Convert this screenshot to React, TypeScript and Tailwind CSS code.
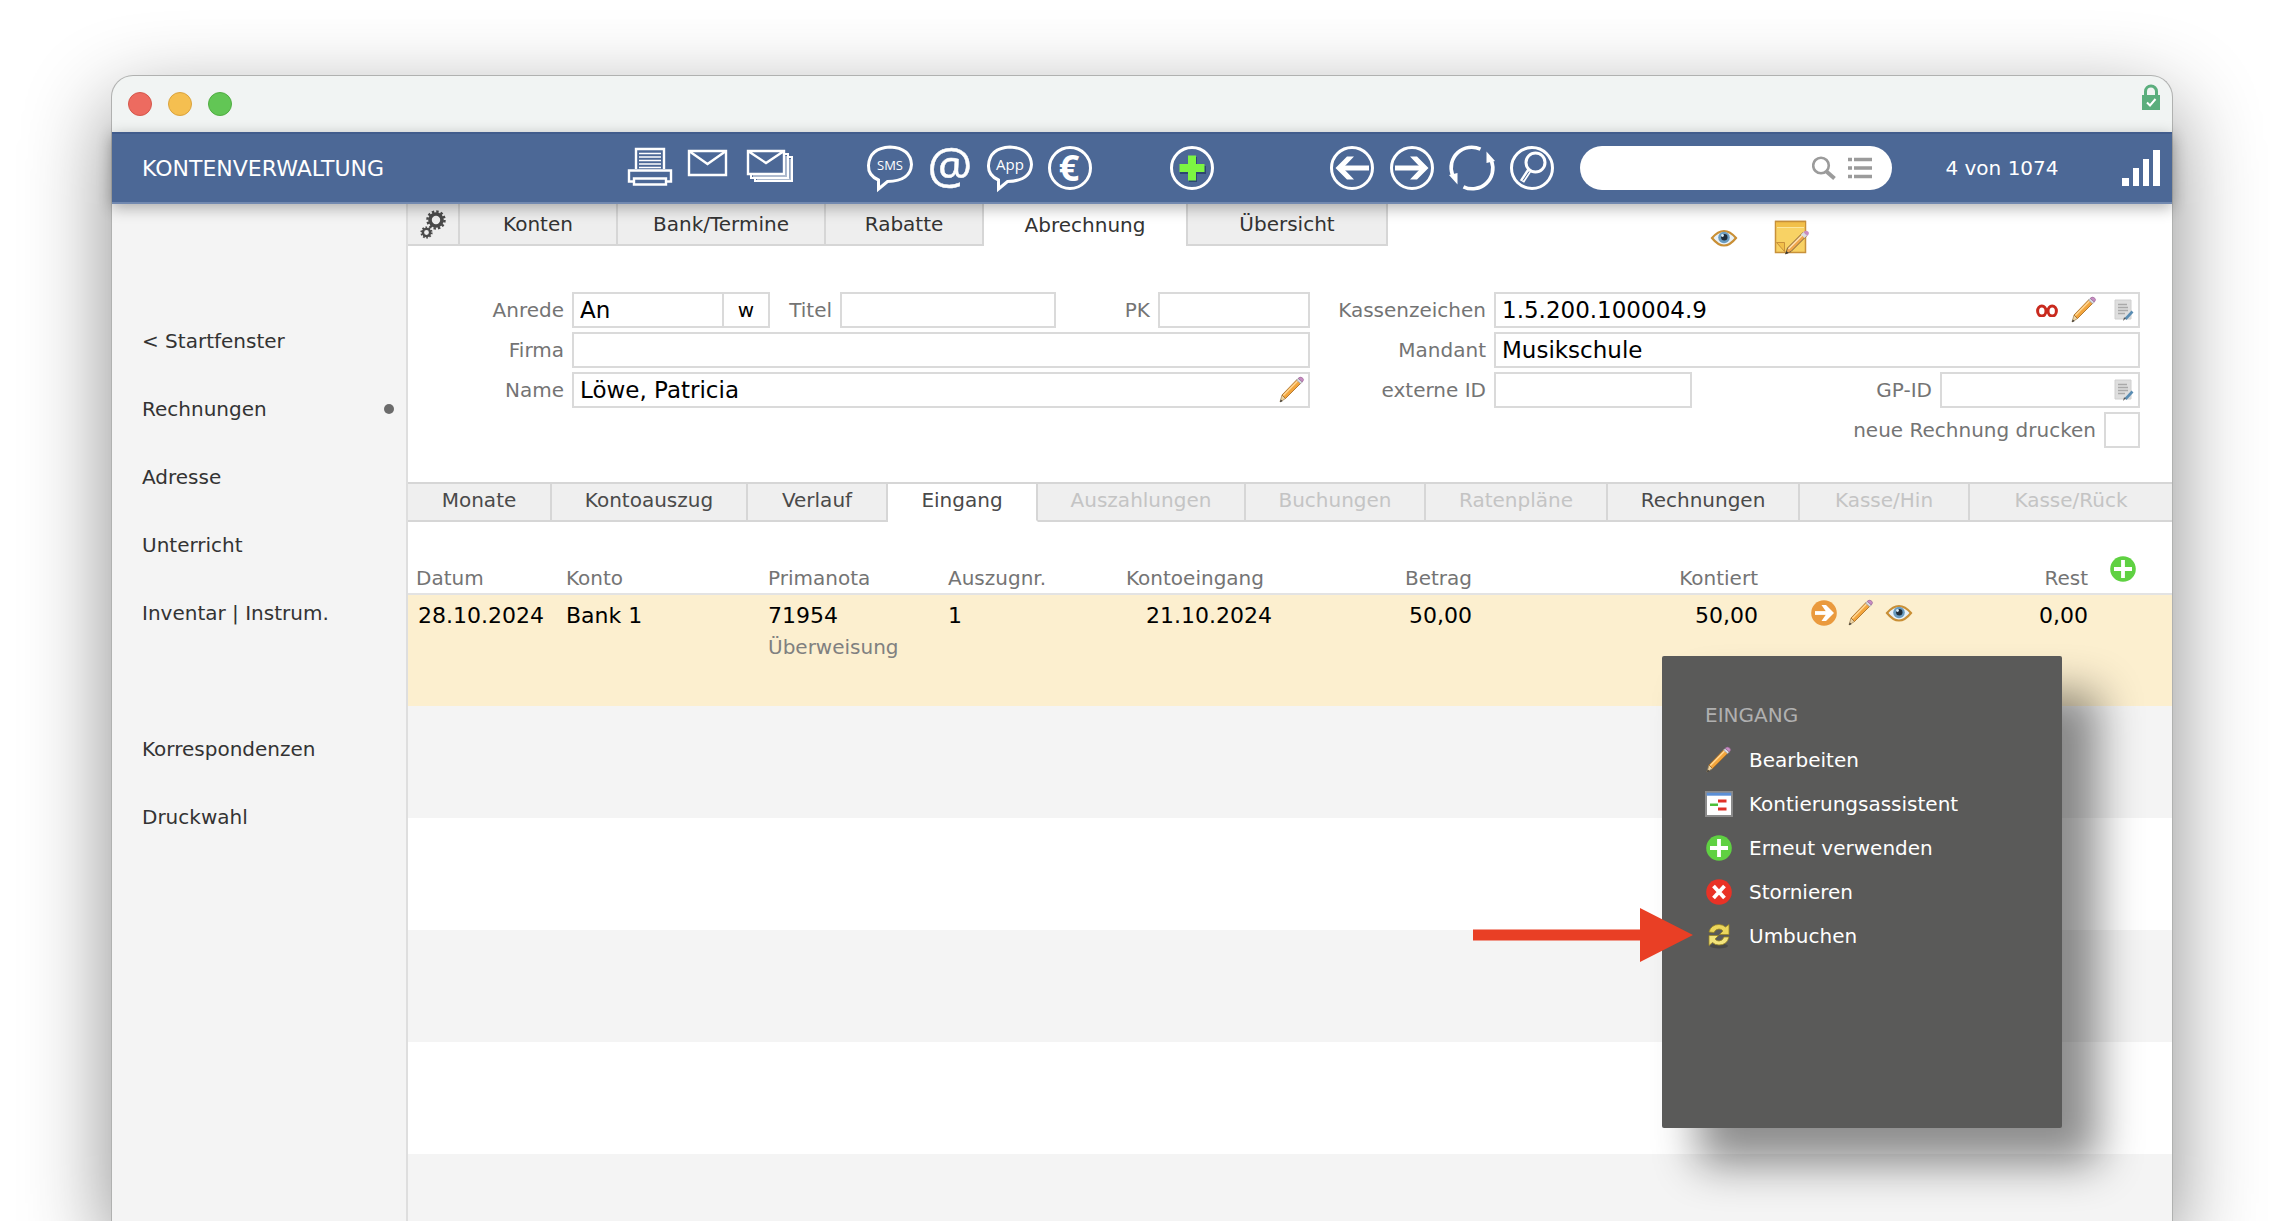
import type { ReactNode } from "react";

type Tab = { label: string; active?: boolean; disabled?: boolean };

const NAV = ["< Startfenster", "Rechnungen", "Adresse", "Unterricht", "Inventar | Instrum.", "", "Korrespondenzen", "Druckwahl"];

const SUB_TABS: Tab[] = [
  { label: "Monate" },
  { label: "Kontoauszug" },
  { label: "Verlauf" },
  { label: "Eingang", active: true },
  { label: "Auszahlungen", disabled: true },
  { label: "Buchungen", disabled: true },
  { label: "Ratenpläne", disabled: true },
  { label: "Rechnungen" },
  { label: "Kasse/Hin", disabled: true },
  { label: "Kasse/Rück", disabled: true },
];

function Pencil() {
  return (
    <svg viewBox="0 0 28 28" className="size-7">
      <path d="M2 26.500l7-5-4-2z" fill="#000" opacity=".15" />
      <path d="M2 26l2-7 3.500 3.500z" fill="#ecd3a4" stroke="#a58a5c" strokeWidth=".8" />
      <path d="M4 19L19 3.500l4 3.500L7.500 22.500z" fill="#f3a53c" stroke="#a9702b" strokeWidth=".9" />
      <path d="M5.300 19.500L19.500 5" stroke="#ffd793" strokeWidth="1.500" />
      <path d="M18.500 4l1.600-1.600 4.200 3.600-1.700 1.700z" fill="#d9dce3" stroke="#8d8f9a" strokeWidth=".6" />
      <path d="M20.200 2.300Q22 .300 24.300 1.700 26.800 3.600 24.300 6z" fill="#c88cc4" stroke="#93638f" strokeWidth=".6" />
      <path d="M2 26l.8-2.600 1.800 1.800z" fill="#333" />
    </svg>
  );
}

function Eye() {
  return (
    <svg viewBox="0 0 28 20" className="h-5 w-7">
      <path d="M2 10Q8 3 14 3t12 7q-6 7.500-12 7.500T2 10z" fill="#e8f1f7" stroke="#c98f35" strokeWidth="2.200" />
      <circle cx="14" cy="9.500" r="5.800" fill="#6a9cc0" />
      <circle cx="14.300" cy="9.300" r="3.200" fill="#1f2d3a" />
      <circle cx="12.500" cy="7.500" r="1.400" fill="#d6ebf7" />
    </svg>
  );
}

function Doc() {
  return (
    <svg viewBox="0 0 20 24" className="h-6 w-5">
      <path d="M1 2h16v19H1z" fill="#dedede" stroke="#d0d0d0" />
      <path d="M4 6.500h9M4 9.500h10M4 12.500h10M4 15.500h7" stroke="#aaa" strokeWidth="1.300" />
      <path d="M18.500 13.500L11.500 21" stroke="#5a8db3" strokeWidth="2.600" />
      <path d="M12 20l-3 3 1-3.500z" fill="#555" />
    </svg>
  );
}

function Badge({ kind }: { kind: "plus" | "cross" | "arrow" }) {
  const fill = kind === "plus" ? "#5fd142" : kind === "cross" ? "#e93226" : "#ea9a3e";
  return (
    <svg viewBox="0 0 26 26" className="size-[26px]" fill="none" stroke="#fff" strokeWidth="3.800">
      <circle cx="13" cy="13" r="12.800" fill={fill} stroke="none" />
      {kind === "plus" && <path d="M13 4v18M4 13h18" />}
      {kind === "cross" && <path d="M7.500 7l11 12M18.500 7l-11 12" />}
      {kind === "arrow" && (
        <>
          <path d="M4 13h13" />
          <path d="M10.500 5h4.500l8 8-8 8h-4.500l5.500-8z" fill="#fff" stroke="none" />
        </>
      )}
    </svg>
  );
}

function Assistant() {
  return (
    <svg viewBox="0 0 28 26" className="h-[26px] w-7">
      <path d="M1 1h26v24H1z" fill="#fff" stroke="#8b8b8b" strokeWidth="2" />
      <path d="M1.700 1.700h24.600v3H1.700z" fill="#5b8fd6" />
      <path d="M5 12.500h8v2.500H5z" fill="#4fbf3a" />
      <path d="M13 8.500h8.500v3H13zM13 16.500h8.500v3H13z" fill="#e03127" />
    </svg>
  );
}

function Rebook() {
  return (
    <svg viewBox="0 0 24 26" className="h-[26px] w-6">
      <ellipse cx="12" cy="23" rx="9" ry="2.500" fill="#000" opacity=".2" />
      <path d="M2 9Q4 1.500 12 1.500q4 0 6.500 2.500L22 1.500v10h-9.500L16 8q-1.500-2-4-2-3.500 0-5 3.500z" fill="#ecd75c" stroke="#9b8724" strokeWidth=".8" />
      <path d="M22 14q-2 8-10 8-4 0-6.500-2.500L2 22.500v-10h9.500L8 16q1.500 2 4 2 3.500 0 5-4z" fill="#f3e47b" stroke="#9b8724" strokeWidth=".8" />
    </svg>
  );
}

function Gears() {
  return (
    <svg viewBox="0 0 26 30" className="h-[30px] w-[26px]" fill="none" stroke="#4a4a4a">
      <circle cx="16" cy="11" r="6" strokeWidth="3.600" />
      <circle cx="16" cy="11" r="8.500" strokeWidth="2.500" strokeDasharray="2.400 2.050" />
      <circle cx="6.500" cy="23.500" r="3.600" strokeWidth="2.400" />
      <circle cx="6.500" cy="23.500" r="5.200" strokeWidth="1.800" strokeDasharray="1.700 1.560" />
    </svg>
  );
}

function Note() {
  return (
    <svg viewBox="0 0 36 36" className="size-9">
      <path d="M1.500 1.500h30v31h-30z" fill="#f8d264" stroke="#c8913a" strokeWidth="1.500" />
      <path d="M2 2h29v5H2z" fill="#f2c04a" />
      <path d="M1 1.500h31" stroke="#c8913a" strokeWidth="1.500" />
      <path d="M3 7.500h27" stroke="#fbe69d" />
      <path d="M2.500 22.500h8v9z" fill="#f2c04a" stroke="#c8913a" />
      <path d="M11.500 34l2-6L29 12.500l3.500 3.500L17 31.500z" fill="#f0a64a" stroke="#7d6440" />
      <path d="M14.500 29L29 14.500" stroke="#fde2b5" strokeWidth="1.500" />
      <path d="M27 14.500l2.500-2.500 3.500 3.500-2.500 2.500z" fill="#d9dce3" />
      <path d="M29.500 12q2.500-2 4.500-.500t-.500 4.500z" fill="#c88cc4" />
      <path d="M11.500 34l1-3 2 2z" fill="#333" />
    </svg>
  );
}

function ToolButton({ label, children }: { label: string; children: ReactNode }) {
  return (
    <button aria-label={label} className="flex size-14 items-center justify-center">
      <svg viewBox="0 0 48 48" className="size-12 overflow-visible" fill="none" stroke="#fff" strokeWidth="3">
        {children}
      </svg>
    </button>
  );
}

function Toolbar() {
  return (
    <div className="flex">
      <div className="flex gap-1">
        <ToolButton label="Drucken">
          <g strokeWidth="2.400">
            <path d="M10 25V5h28v20" />
            <path d="M13 9.500h22M13 13h22M13 16.500h22M13 20h22M13 23.500h22" strokeWidth="1.500" />
            <path d="M8 37.500H3v-11h42v11h-5" />
            <path d="M8 34.500h32v6H8z" />
          </g>
        </ToolButton>
        <ToolButton label="E-Mail">
          <path d="M3 7h37v24H3z" strokeWidth="2.400" />
          <path d="M3 7l18.500 13L40 7" strokeWidth="2.400" />
        </ToolButton>
        <ToolButton label="Serienmail">
          <g strokeWidth="2.400">
            <path d="M2 7h36v23H2zM2 7l18 12L38 7" />
            <path d="M39 10h3v24H5v-3M43 13h3v24H9v-3" strokeWidth="2" />
            <path d="M40.500 12v20.500H7M44.500 15v20.500H11" strokeOpacity=".55" />
          </g>
        </ToolButton>
      </div>
      <div className="ml-16 flex gap-1">
        <ToolButton label="SMS">
          <path d="M12.500 36Q2 31.500 2.500 21.500 3.500 4 24 3q20.500 1 21.500 17.500Q44.500 37 21.500 37.500L12.500 45z" />
          <text x="24" y="25.500" textAnchor="middle" fontSize="13" fill="#fff" stroke="none" className="font-['Open_Sans',sans-serif]">SMS</text>
        </ToolButton>
        <ToolButton label="At">
          <text x="24" y="39" textAnchor="middle" fontSize="50" fill="#fff" stroke="#fff" strokeWidth=".5" className="font-['Open_Sans',sans-serif]">@</text>
        </ToolButton>
        <ToolButton label="App">
          <path d="M12.500 36Q2 31.500 2.500 21.500 3.500 4 24 3q20.500 1 21.500 17.500Q44.500 37 21.500 37.500L12.500 45z" />
          <text x="24" y="25.500" textAnchor="middle" fontSize="15" fill="#fff" stroke="none" className="font-['Open_Sans',sans-serif]">App</text>
        </ToolButton>
        <ToolButton label="Zahlung">
          <circle cx="24" cy="24" r="20.500" />
          <text x="23" y="37" textAnchor="middle" fontSize="36" fontWeight="700" fill="#fff" stroke="none" className="font-['Open_Sans',sans-serif]">€</text>
        </ToolButton>
      </div>
      <div className="ml-[66px]">
        <ToolButton label="Neu">
          <circle cx="24" cy="24" r="20.500" />
          <path d="M25 13v25M12 26h26" stroke="#2c4670" strokeWidth="8" />
          <path d="M24 11.500v25M11.500 24h25" stroke="#7cf542" strokeWidth="8" />
        </ToolButton>
      </div>
      <div className="ml-26 flex gap-1">
        <ToolButton label="Zurück">
          <circle cx="24" cy="24" r="20.500" />
          <path d="M41 24H11" strokeWidth="5" />
          <path d="M26 12.500h-7L7.500 24 19 35.500h7L15 24z" fill="#fff" stroke="none" />
        </ToolButton>
        <ToolButton label="Vor">
          <circle cx="24" cy="24" r="20.500" />
          <path d="M7 24h30" strokeWidth="5" />
          <path d="M22 12.500h7L40.500 24 29 35.500h-7L33 24z" fill="#fff" stroke="none" />
        </ToolButton>
        <ToolButton label="Aktualisieren">
          <path d="M32.500 5.200A20.500 20.500 0 0 0 4.500 31" strokeWidth="3.600" />
          <path d="M15.500 42.800A20.500 20.500 0 0 0 43.500 17" strokeWidth="3.600" />
          <path d="M1 31l8.500 9.500V29zM38.500 7.500L47 17l-8.500 2z" fill="#fff" stroke="none" />
        </ToolButton>
        <ToolButton label="Suchen">
          <circle cx="24" cy="24" r="20.500" />
          <circle cx="27.500" cy="18.500" r="9.500" />
          <path d="M21.500 26L14 37.500" strokeWidth="5" />
          <path d="M21 27.500L15 36.500" stroke="#4c6896" strokeWidth="1" />
        </ToolButton>
      </div>
    </div>
  );
}

function Header() {
  return (
    <header className="relative z-10 flex h-[72px] items-center border-t-2 border-b-2 border-t-[#415c8c] border-b-[#7289b0] bg-[#4c6896] pr-3 text-white shadow-[0_4px_14px_rgba(0,0,0,0.3)]">
      <h1 className="w-[510px] shrink-0 pl-[30px] text-[22px]">KONTENVERWALTUNG</h1>
      <Toolbar />
      <label className="ml-5 flex h-11 w-[312px] items-center rounded-full bg-white pr-5">
        <input aria-label="Suche" className="w-0 grow bg-transparent pl-5 text-[20px] text-black outline-none" />
        <svg viewBox="0 0 60 26" className="h-[26px] w-[60px]" fill="none" stroke="#9b9b9b">
          <circle cx="9" cy="10.500" r="7.800" strokeWidth="2.600" />
          <path d="M14.500 16.500l8 7" strokeWidth="4" />
          <path d="M36 4.500h4M42 4.500h18M36 13h4M42 13h18M36 21.500h4M42 21.500h18" strokeWidth="3.600" />
        </svg>
      </label>
      <div className="grow pr-2.5 text-center text-[20px]">4 von 1074</div>
      <svg viewBox="0 0 38 36" className="h-9 w-[38px]" fill="#fff">
        <path d="M0 28h7v8H0zM11 18h6v18h-6zM21 9h6v27h-6zM31 0h7v36h-7z" />
      </svg>
    </header>
  );
}

function Field({ id, label, labelClass, boxClass, value = "", children }: {
  id: string;
  label: string;
  labelClass: string;
  boxClass: string;
  value?: string;
  children?: ReactNode;
}) {
  return (
    <>
      <label htmlFor={id} className={`shrink-0 pr-2 text-right text-[20px] text-[#747474] ${labelClass}`}>{label}</label>
      <div className={`flex h-9 items-center border-2 border-[#dadada] bg-white ${boxClass}`}>
        <input id={id} defaultValue={value} className="w-0 min-w-0 grow bg-transparent pl-1.5 text-[23px] text-black outline-none" />
        {children}
      </div>
    </>
  );
}

function AccountForm() {
  return (
    <form className="flex pt-9 pr-8 pb-[34px]">
      <div className="flex w-[902px] shrink-0 flex-col gap-1">
        <div className="flex items-center">
          <Field id="anrede" label="Anrede" labelClass="w-[164px]" boxClass="w-[152px]" value="An" />
          <input aria-label="Geschlecht" defaultValue="w" className="h-9 w-[46px] border-2 border-l-0 border-[#dadada] text-center text-[20px] text-black" />
          <Field id="titel" label="Titel" labelClass="w-[70px]" boxClass="w-[216px]" />
          <Field id="pk" label="PK" labelClass="w-[102px]" boxClass="grow" />
        </div>
        <div className="flex items-center">
          <Field id="firma" label="Firma" labelClass="w-[164px]" boxClass="grow" />
        </div>
        <div className="flex items-center">
          <Field id="name" label="Name" labelClass="w-[164px]" boxClass="grow" value="Löwe, Patricia">
            <button type="button" aria-label="Name bearbeiten" className="mr-0.5"><Pencil /></button>
          </Field>
        </div>
      </div>
      <div className="flex grow flex-col gap-1">
        <div className="flex items-center">
          <Field id="kassenzeichen" label="Kassenzeichen" labelClass="w-[184px]" boxClass="grow" value="1.5.200.100004.9">
            <div className="flex items-center pr-1">
              <svg viewBox="0 0 22 14" className="mr-3 h-3.5 w-[22px]" fill="none" stroke="#c92a1e" strokeWidth="3">
                <ellipse cx="5.800" cy="8" rx="4.200" ry="5" />
                <ellipse cx="16.200" cy="8" rx="4.200" ry="5" />
              </svg>
              <button type="button" aria-label="Kassenzeichen bearbeiten" className="mr-4"><Pencil /></button>
              <Doc />
            </div>
          </Field>
        </div>
        <div className="flex items-center">
          <Field id="mandant" label="Mandant" labelClass="w-[184px]" boxClass="grow" value="Musikschule" />
        </div>
        <div className="flex items-center">
          <Field id="extern" label="externe ID" labelClass="w-[184px]" boxClass="w-[198px]" />
          <div className="grow" />
          <Field id="gpid" label="GP-ID" labelClass="w-[100px]" boxClass="w-[200px] pr-1"><Doc /></Field>
        </div>
        <div className="flex items-center justify-end">
          <label htmlFor="neu" className="pr-2 text-[20px] text-[#747474]">neue Rechnung drucken</label>
          <input id="neu" type="checkbox" className="size-9 appearance-none border-2 border-[#dadada] bg-white" />
        </div>
      </div>
    </form>
  );
}

function MainTabs() {
  const tab = "border-r-2 border-b-2 border-[#d6d6d6] bg-[#eee] text-center";
  return (
    <div className="flex items-start">
      <nav className="flex h-[42px] text-[20px] text-[#333]">
        <button aria-label="Einstellungen" className={`w-[52px] pl-3 ${tab}`}><Gears /></button>
        <button className={`w-[158px] ${tab}`}>Konten</button>
        <button className={`w-[208px] ${tab}`}>Bank/Termine</button>
        <button className={`w-[158px] ${tab}`}>Rabatte</button>
        <button className="w-[202px]">Abrechnung</button>
        <button className={`w-[202px] border-l-2 ${tab}`}>Übersicht</button>
      </nav>
      <div className="ml-[322px] flex items-center gap-9 pt-4">
        <button aria-label="Ansicht"><Eye /></button>
        <button aria-label="Notiz"><Note /></button>
      </div>
    </div>
  );
}

function SubTabs() {
  return (
    <nav className="grid h-10 grid-cols-[144fr_196fr_140fr_150fr_208fr_180fr_182fr_192fr_170fr_202fr] border-t-2 border-[#d6d6d6] text-[20px] text-[#4a4a4a]">
      {SUB_TABS.map(({ label, active, disabled }, i) => (
        <button
          key={label}
          disabled={disabled}
          className={`border-b-2 border-[#d6d6d6] pb-1 ${active ? "border-b-white bg-white" : "bg-[#efefef]"} ${i < 9 ? "border-r-2" : ""} ${disabled ? "text-[#c4c4c4]" : ""}`}
        >
          {label}
        </button>
      ))}
    </nav>
  );
}

function Menu() {
  const item = "flex h-11 w-full items-center gap-4 text-left";
  const icon = "flex w-7 justify-center";
  return (
    <div className="absolute top-[134px] right-[110px] z-20 h-[472px] w-[400px] rounded-[2px] bg-[#5a5a59] pt-11 pl-[43px] text-[20px] text-white shadow-[36px_36px_44px_rgba(0,0,0,0.45)]">
      <div className="flex h-[30px] items-center text-[#b0b0b0]">EINGANG</div>
      <div className="pt-2">
        <button className={item}><span className={icon}><Pencil /></span>Bearbeiten</button>
        <button className={item}><span className={icon}><Assistant /></span>Kontierungsassistent</button>
        <button className={item}><span className={icon}><Badge kind="plus" /></span>Erneut verwenden</button>
        <button className={item}><span className={icon}><Badge kind="cross" /></span>Stornieren</button>
        <button className={item}><span className={icon}><Rebook /></span>Umbuchen</button>
      </div>
      <svg viewBox="0 0 220 54" className="absolute top-[252px] right-[369px] h-[54px] w-[220px]">
        <path d="M0 21.500h167V0l53 27-53 27V32.500H0z" fill="#e93f25" />
      </svg>
    </div>
  );
}

function Receipts() {
  return (
    <div className="pt-[34px]">
      <table className="w-full table-fixed border-collapse">
        <colgroup>
          <col className="w-[150px]" />
          <col className="w-[202px]" />
          <col className="w-[180px]" />
          <col className="w-[170px]" />
          <col className="w-[180px]" />
          <col className="w-[182px]" />
          <col />
          <col className="w-[136px]" />
          <col className="w-[200px]" />
          <col className="w-[78px]" />
        </colgroup>
        <thead>
          <tr className="h-[38px] border-b-2 border-[#e3e3e3] text-left align-bottom text-[20px] text-[#747474] [&>th]:font-normal">
            <th className="pl-2">Datum</th>
            <th className="pl-2">Konto</th>
            <th className="pl-2">Primanota</th>
            <th className="pl-2">Auszugnr.</th>
            <th className="pl-4">Kontoeingang</th>
            <th className="text-right">Betrag</th>
            <th className="text-right">Kontiert</th>
            <th />
            <th className="pr-1.5 text-right">Rest</th>
            <th className="align-top"><button aria-label="Neuer Eingang" className="block pl-4"><Badge kind="plus" /></button></th>
          </tr>
        </thead>
        <tbody className="text-[22px] text-black">
          <tr className="h-28 bg-[#fcefcf] align-top [&>td]:pt-1">
            <td className="pl-2.5 whitespace-nowrap">28.10.2024</td>
            <td className="pl-2">Bank 1</td>
            <td className="pl-2">71954<div className="text-[20px] text-[#808080]">Überweisung</div></td>
            <td className="pl-2">1</td>
            <td className="pl-9 whitespace-nowrap">21.10.2024</td>
            <td className="text-right">50,00</td>
            <td className="text-right">50,00</td>
            <td className="pl-[53px]">
              <div className="flex w-max items-center gap-2.5">
                <button aria-label="Öffnen"><Badge kind="arrow" /></button>
                <button aria-label="Bearbeiten"><Pencil /></button>
                <button aria-label="Anzeigen"><Eye /></button>
              </div>
            </td>
            <td className="pr-1.5 text-right">0,00</td>
            <td />
          </tr>
          {[0, 1, 2, 3, 4].map((n) => (
            <tr key={n} className="h-28 odd:bg-white even:bg-[#f4f4f4]"><td colSpan={10} /></tr>
          ))}
        </tbody>
      </table>
    </div>
  );
}

export default function App() {
  return (
    <div className="flex h-screen flex-col overflow-hidden bg-white px-[111px] pt-[75px] font-['DejaVu_Sans',Verdana,sans-serif]">
      <div className="flex grow flex-col rounded-t-[22px] border border-b-0 border-[#b0b1b0] bg-[#f1f4f3] shadow-[0_30px_86px_rgba(0,0,0,0.46)]">
        <div className="flex h-14 shrink-0 items-start justify-between pt-2 pr-3 pl-4">
          <div className="flex gap-4 pt-2">
            <span className="size-6 rounded-full border border-[#d5574b] bg-[#ed6b60]" />
            <span className="size-6 rounded-full border border-[#dba33d] bg-[#f5bf50]" />
            <span className="size-6 rounded-full border border-[#50ad42] bg-[#62c655]" />
          </div>
          <svg viewBox="0 0 18 26" className="h-[26px] w-[18px]">
            <path d="M3.500 12V7.500a5.500 5.500 0 0 1 11 0V12" fill="none" stroke="#5bae7d" strokeWidth="3" />
            <path d="M0 11h18v15H0z" fill="#5bae7d" />
            <path d="M5 18.500l3 3 5.500-6.500" fill="none" stroke="#fff" strokeWidth="2" />
          </svg>
        </div>
        <Header />
        <div className="flex h-0 grow overflow-hidden bg-white">
          <nav className="w-[296px] shrink-0 border-r-2 border-[#dedede] bg-[#f4f4f4] pt-[103px] text-[20px] text-[#333]">
            {NAV.map((label) => (
              <a key={label} href="#" className="flex h-[68px] items-center justify-between pr-3 pl-[30px]">
                {label}
                {label === "Rechnungen" && <span className="size-2.5 rounded-full bg-[#6b6b6b]" />}
              </a>
            ))}
          </nav>
          <main className="min-w-0 grow">
            <MainTabs />
            <AccountForm />
            <SubTabs />
            <div className="relative">
              <Receipts />
              <Menu />
            </div>
          </main>
        </div>
      </div>
    </div>
  );
}
